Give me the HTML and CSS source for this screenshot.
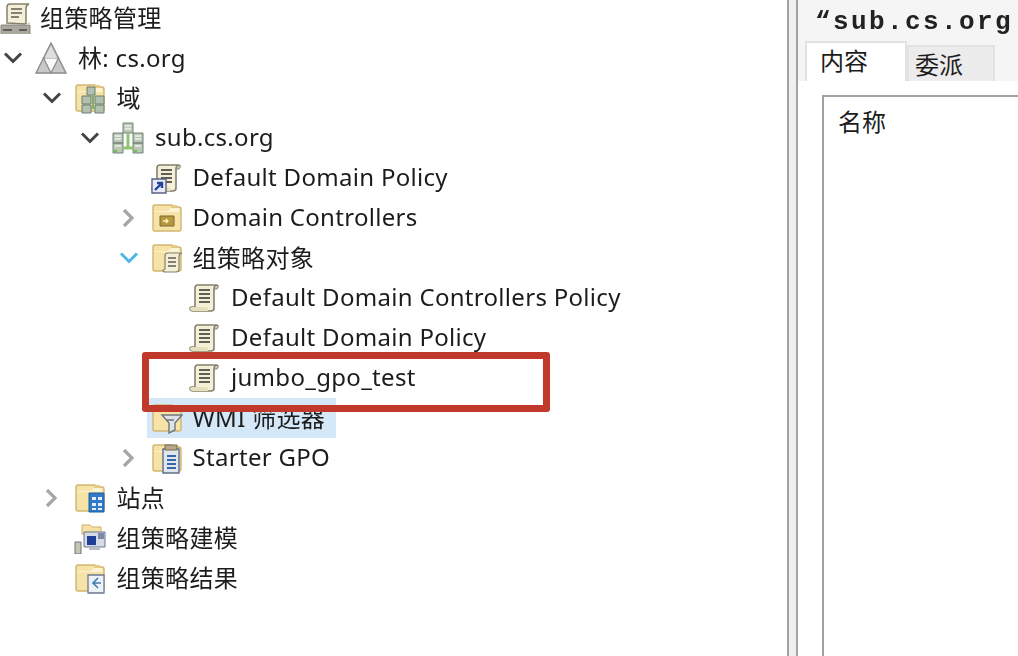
FILE: index.html
```html
<!DOCTYPE html>
<html lang="zh-CN">
<head>
    <meta charset="UTF-8">
    <meta name="viewport" content="width=device-width, initial-scale=1.0">
    <title>组策略管理</title>
    <link rel="stylesheet" href="styles.css">
</head>
<body>
    <svg class="defs" aria-hidden="true">
        <symbol id="chev-down" viewBox="0 0 24 24"><path d="M4 7.5l8 8 8-8" fill="none" stroke="currentColor" stroke-width="3"/></symbol>
        <symbol id="chev-right" viewBox="0 0 24 24"><path d="M7 4l8 8-8 8" fill="none" stroke="currentColor" stroke-width="3.2"/></symbol>
        <symbol id="folder" viewBox="0 0 32 32">
            <path d="M2 27V5q0-2 2-2h17l2 2h5q2 0 2 2v20q0 2-2 2H4q-2 0-2-2z" fill="#f7e3a8" stroke="#d0b673" stroke-width="1.4"/>
            <path d="M4 9h13l3-3h8v4H4z" fill="#fcf3d2"/>
            <path d="M20 3h6v3h-6z" fill="#e3c983"/>
        </symbol>
        <symbol id="scroll" viewBox="0 0 32 32">
            <path d="M6 25V6q0-3 3-3h19q-3 1-3 4v19q0 3-3 3H4q-3 0-3-3 0-1 2-1z" fill="#f5efd8" stroke="#82816e" stroke-width="1.6"/>
            <path d="M10 8h11M10 12h11M10 16h11M10 20h11" stroke="#5f5f56" stroke-width="1.8"/>
            <path d="M25 7q0-4 4-4 1 2-1 4z" fill="#cfcbb2" stroke="#82816e"/>
            <path d="M3 25h15q1 1 1 4H4q-3 0-3-3z" fill="#e6dfbc"/>
        </symbol>
        <symbol id="servers" viewBox="0 0 32 32">
            <path d="M11 1h10v10H11zM1 11h10v10H1zM21 11h10v10H21zM1 21h10v10H1zM21 21h10v10H21z" fill="#b9c7b6" stroke="#728375"/>
            <path d="M3 14h6M3 17h6M23 14h6M23 17h6M13 4h6M13 7h6M3 24h6M23 24h6" stroke="#f0f3ec" stroke-width="1.6"/>
            <path d="M11 26h10M16 11v15" stroke="#8fc56e" stroke-width="3"/>
            <path d="M2 29h3M22 29h3" stroke="#6cc04a" stroke-width="2"/>
        </symbol>
    </svg>

    <div class="console">
        <div class="tree">
            <div class="row title-row">
                <svg class="icon" viewBox="0 0 32 32">
                    <path d="M7 21V5q0-3 3-3h19q-3 1-3 4v16z" fill="#f5efd8" stroke="#82816e" stroke-width="1.5"/>
                    <path d="M11 7h11M11 11h11M11 15h8" stroke="#5f5f56" stroke-width="1.7"/>
                    <path d="M1 23h29v10H1z" fill="#a8a89c" stroke="#85857a"/>
                    <path d="M1 23h24l5-3v3z" fill="#d9d6bd"/>
                    <path d="M3 28h9M19 28h8" stroke="#5f5f58" stroke-width="2"/>
                </svg>
                <span class="label">组策略管理</span>
            </div>

            <div class="row depth-0">
                <span class="twisty open"><svg><use href="#chev-down"/></svg></span>
                <svg class="icon" viewBox="0 0 32 32">
                    <path d="M16 1L1 31h30z" fill="#c9c9c9" stroke="#8b8b8b" stroke-width="1.4"/>
                    <path d="M8.5 16h15L16 31z" fill="#fafafa" stroke="#8b8b8b" stroke-width="1.2"/>
                    <path d="M16 4l6 12H10z" fill="#dedede"/>
                </svg>
                <span class="label">林: cs.org</span>
            </div>

            <div class="row depth-1">
                <span class="twisty open"><svg><use href="#chev-down"/></svg></span>
                <svg class="icon" viewBox="0 0 32 32">
                    <use href="#folder"/>
                    <path d="M13 5h8v8h-8zM8 14h9v8H8zM21 14h9v8h-9zM8 23h9v8H8zM21 23h9v8h-9z" fill="#b2c1af" stroke="#6d7f70"/>
                    <path d="M17 26h4M19 13v13" stroke="#7fae70" stroke-width="2"/>
                </svg>
                <span class="label">域</span>
            </div>

            <div class="row depth-2">
                <span class="twisty open"><svg><use href="#chev-down"/></svg></span>
                <svg class="icon"><use href="#servers"/></svg>
                <span class="label">sub.cs.org</span>
            </div>

            <div class="row depth-3">
                <span class="twisty"></span>
                <svg class="icon" viewBox="0 0 32 32">
                    <use href="#scroll"/>
                    <path d="M1 17h14v14H1z" fill="#e9ecf8" stroke="#5a6386" stroke-width="1.4"/>
                    <path d="M4 28l6-6M6 21h5v5" fill="none" stroke="#24439c" stroke-width="2.4"/>
                </svg>
                <span class="label">Default Domain Policy</span>
            </div>

            <div class="row depth-3">
                <span class="twisty closed"><svg><use href="#chev-right"/></svg></span>
                <svg class="icon" viewBox="0 0 32 32">
                    <use href="#folder"/>
                    <path d="M9 14h14v10H9z" fill="#b8973f" stroke="#7d6a2b"/>
                    <path d="M12 19h5M15 17l2 2-2 2" fill="none" stroke="#fff2c4" stroke-width="1.3"/>
                </svg>
                <span class="label">Domain Controllers</span>
            </div>

            <div class="row depth-3">
                <span class="twisty active"><svg><use href="#chev-down"/></svg></span>
                <svg class="icon" viewBox="0 0 32 32">
                    <use href="#folder"/>
                    <path d="M14 30q-2 0-2-2l2-1V14q0-3 3-3h14q-3 1-3 3v13q0 3-3 3z" fill="#f5efd8" stroke="#82816e" stroke-width="1.2"/>
                    <path d="M17 16h8M17 20h8M17 24h8" stroke="#5f5f56" stroke-width="1.5"/>
                </svg>
                <span class="label">组策略对象</span>
            </div>

            <div class="row depth-4">
                <span class="twisty"></span>
                <svg class="icon"><use href="#scroll"/></svg>
                <span class="label">Default Domain Controllers Policy</span>
            </div>

            <div class="row depth-4">
                <span class="twisty"></span>
                <svg class="icon"><use href="#scroll"/></svg>
                <span class="label">Default Domain Policy</span>
            </div>

            <div class="row depth-4 marked">
                <span class="twisty"></span>
                <svg class="icon"><use href="#scroll"/></svg>
                <span class="label">jumbo_gpo_test</span>
                <div class="red-box"></div>
            </div>

            <div class="row depth-3 selected">
                <span class="twisty"></span>
                <svg class="icon" viewBox="0 0 32 32">
                    <use href="#folder"/>
                    <path d="M11 13h20l-7 8v7l-6 3V21z" fill="#dfe3e6" stroke="#6d7780" stroke-width="1.4"/>
                    <path d="M15 18h8" stroke="#6d7780" stroke-width="1.5"/>
                </svg>
                <span class="label">WMI 筛选器</span>
            </div>

            <div class="row depth-3">
                <span class="twisty closed"><svg><use href="#chev-right"/></svg></span>
                <svg class="icon" viewBox="0 0 32 32">
                    <use href="#folder"/>
                    <path d="M12 7h16v24H12z" fill="#dfe6f0" stroke="#5d6f8c" stroke-width="1.4"/>
                    <path d="M14 3h12v5H14z" fill="#b7a98a" stroke="#77694e"/>
                    <path d="M16 14h9M16 18h9M16 22h9M16 26h9" stroke="#3a66a8" stroke-width="2"/>
                </svg>
                <span class="label">Starter GPO</span>
            </div>

            <div class="row depth-1">
                <span class="twisty closed"><svg><use href="#chev-right"/></svg></span>
                <svg class="icon" viewBox="0 0 32 32">
                    <use href="#folder"/>
                    <path d="M15 11h15v19H15z" fill="#2f7bc8" stroke="#1e5c9f"/>
                    <path d="M18 15h4v3h-4zM24 15h4v3h-4zM18 21h4v3h-4zM24 21h4v3h-4zM18 26h4v2h-4zM24 26h4v2h-4z" fill="#e3f0fb"/>
                </svg>
                <span class="label">站点</span>
            </div>

            <div class="row depth-1">
                <span class="twisty"></span>
                <svg class="icon" viewBox="0 0 32 32">
                    <path d="M8 12V3h8l2 2h9v7z" fill="#f6e1a4" stroke="#cdb06c"/>
                    <path d="M10 10h21v15H10z" fill="#d7dbe6" stroke="#6a7390"/>
                    <path d="M13 14h9v9h-9z" fill="#1f3f96"/>
                    <path d="M24 11h6v6h-6z" fill="#7c89ad"/>
                    <path d="M15 25h11v3H15z" fill="#b9bdc6"/>
                    <path d="M1 20h6v12H1z" fill="#c3c7b8" stroke="#6f7468"/>
                </svg>
                <span class="label">组策略建模</span>
            </div>

            <div class="row depth-1">
                <span class="twisty"></span>
                <svg class="icon" viewBox="0 0 32 32">
                    <use href="#folder"/>
                    <path d="M14 13h16v18H14z" fill="#eef1f6" stroke="#6c7a90" stroke-width="1.3"/>
                    <path d="M24 16l-5 5 5 5M19 21h8" fill="none" stroke="#3d7cb8" stroke-width="1.6"/>
                </svg>
                <span class="label">组策略结果</span>
            </div>
        </div>

        <div class="splitter"></div>

        <div class="pane">
            <div class="pane-title">“sub.cs.org</div>
            <div class="tabs">
                <div class="tab current">内容</div>
                <div class="tab">委派</div>
            </div>
            <div class="tab-page">
                <div class="list-box">
                    <div class="col-head">名称</div>
                </div>
            </div>
        </div>
    </div>
</body>
</html>
```

FILE: styles.css
```css
html, body {
    margin: 0;
    padding: 0;
    height: 100%;
    overflow: hidden;
    background-color: #fff;
}
body {
    font-family: "Noto Sans", "Noto Sans CJK SC", sans-serif;
    font-size: 24px;
    color: #1c1c1c;
}
.defs {
    display: none;
}
.console {
    display: flex;
    height: 656px;
}

/* left tree */
.tree {
    width: 787px;
    flex-shrink: 0;
    position: relative;
    z-index: 0;
}
.row {
    display: flex;
    align-items: center;
    height: 40px;
    position: relative;
}
.title-row {
    height: 36px;
    padding-bottom: 2px;
    gap: 8px;
}
.depth-0 { padding-left: 0; }
.depth-1 { padding-left: 38.5px; }
.depth-2 { padding-left: 77px; }
.depth-3 { padding-left: 115.5px; }
.depth-4 { padding-left: 154px; }
.twisty {
    width: 36px;
    height: 24px;
    flex-shrink: 0;
    filter: blur(0.4px);
}
.twisty svg {
    display: block;
    width: 24px;
    height: 24px;
    margin-left: 1px;
}
.twisty.open { color: #444; }
.twisty.closed { color: #a6a6a6; }
.twisty.active { color: #4db8e8; }
.icon {
    width: 32px;
    height: 32px;
    flex-shrink: 0;
    margin-left: -1px;
    filter: blur(0.5px);
}
.label {
    margin-left: 10px;
    margin-bottom: 4px;
    letter-spacing: 0.3px;
    white-space: nowrap;
    filter: blur(0.4px);
}
.depth-0 .label,
.depth-1 .label,
.depth-2 .label {
    margin-left: 11px;
}
.title-row .label {
    margin-left: 0;
}
.title-row .icon {
    margin-left: 0;
}
.selected::before {
    content: "";
    position: absolute;
    left: 147px;
    top: 0;
    width: 189px;
    height: 40px;
    background-color: #d5e8f8;
    z-index: -1;
}
.red-box {
    position: absolute;
    left: 142px;
    top: -6px;
    width: 408px;
    height: 60px;
    box-sizing: border-box;
    border: 7px solid #c0392b;
    border-radius: 3px;
    z-index: 2;
}

/* right pane */
.splitter {
    width: 11px;
    flex-shrink: 0;
    box-sizing: border-box;
    background-color: #f0f0f0;
    border-left: 2px solid #a3a3a3;
    border-right: 2px solid #a3a3a3;
}
.pane {
    flex: 1;
    min-width: 0;
    background-color: #f5f5f5;
    display: flex;
    flex-direction: column;
}
.pane-title {
    height: 41px;
    line-height: 45px;
    padding-left: 17px;
    font-family: "Liberation Mono", monospace;
    font-weight: bold;
    font-size: 26px;
    letter-spacing: 2.4px;
    white-space: nowrap;
    overflow: hidden;
    color: #222;
    filter: blur(0.3px);
}
.tabs {
    display: flex;
    align-items: flex-end;
    height: 40px;
    padding-left: 7px;
}
.tab {
    width: 88px;
    height: 36px;
    box-sizing: border-box;
    background-color: #ececec;
    border: 2px solid #e2e2e2;
    border-bottom: none;
    padding-left: 6px;
    line-height: 36px;
}
.tab.current {
    width: 102px;
    height: 40px;
    background-color: #fff;
    padding-left: 13px;
    line-height: 36px;
}
.tab-page {
    flex: 1;
    background-color: #fff;
    padding: 14px 0 0 24px;
}
.list-box {
    height: 100%;
    box-sizing: border-box;
    border-top: 2px solid #a0a0a0;
    border-left: 2px solid #a0a0a0;
    padding: 6px 0 0 14px;
}
```
